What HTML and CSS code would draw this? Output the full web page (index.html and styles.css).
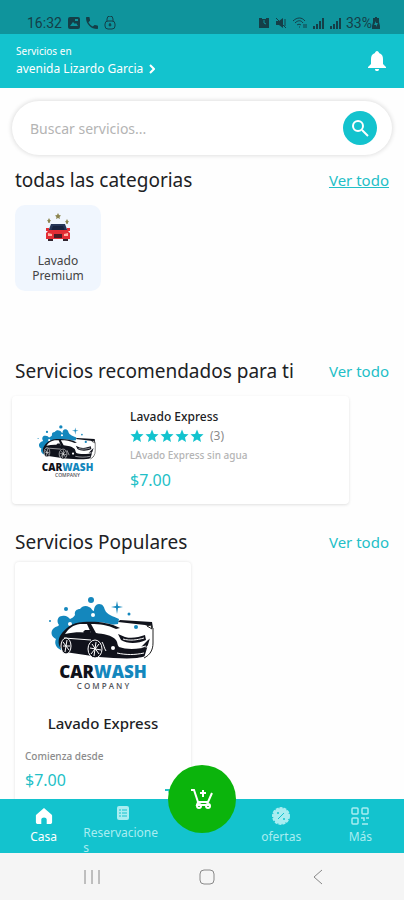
FILE: index.html
```html
<!DOCTYPE html>
<html lang="es">
<head>
    <meta charset="UTF-8">
    <meta name="viewport" content="width=device-width, initial-scale=1.0">
    <title>Car Wash</title>
    <link rel="stylesheet" href="styles.css">
</head>
<body>
    <!-- Shared drawings -->
    <svg class="defs" aria-hidden="true">
        <symbol id="star" viewBox="0 0 24 24">
            <path d="M12 1l3.2 7.4 8 .7-6.100 5.300 1.800 7.900L12 18.100l-6.900 4.200 1.800-7.900L.8 9.100l8-.7z"/>
        </symbol>
        <symbol id="carwash" viewBox="0 0 110 66">
            <!-- foam -->
            <g fill="#1487bd">
                <path d="M13 54C8 52 6 47 8 43c-5-2-6-8-2-11 2-2 4-1 5-3-3-4-1-9 3-9 4-1 6 1 8 3 2-1 4-2 5-4-1-4 2-6 5-6 2-3 6-4 9-2 3 1 3 4 5 4 0-4 2-7 5-7 4 0 5 3 6 6 2 5 8 6 14 9l-1 5-16 2-26 1-11 8z"/>
                <circle cx="43" cy="4" r="3"/>
                <circle cx="18" cy="13" r="2"/>
                <circle cx="2" cy="25" r="1"/>
                <circle cx="81" cy="18" r="1.500"/>
                <circle cx="88" cy="31" r="2"/>
                <path d="M69 5l1 5 5 1-5 1-1 6-1-6-5-1 5-1z"/>
            </g>
            <circle cx="45" cy="19" r="2" fill="#fff"/>
            <circle cx="22" cy="28" r="2" fill="#fff"/>
            <!-- body -->
            <path d="M14 40c4-7 10-12 18-13 14-2 30-1 40 5l24 4 8 6v12l-8 7H60l-16-2-31-8z" fill="#fff"/>
            <path d="M12 40c6-9 12-13 23-14 12-1 26 0 37 6l-4 1c-8-4-16-5-25-5l5 9c7 1 16 2 20 7 2 3 1 5 3 7 8 3 20 2 30 0l2 5c-3 4-8 5-14 6-11 1-24 0-38-1L17 56c-6-3-8-10-5-16z" fill="#10121b"/>
            <path d="M17 38c4-6 8-9 15-10h7l4 9c-9-1-17-1-26 1z" fill="#fff"/>
            <path d="M35 36l2-2h5l1 3-6 1z" fill="#10121b"/>
            <path d="M70 38l7 3c7 2 14 0 20-2l1 5c-8 4-19 4-25 0zM100 44l3-2v5l-6 5-4-1z" fill="#10121b"/>
            <path d="M72 24l32 2 1 6-8-3-27-3z" fill="#10121b"/>
            <path d="M99 30l4-1 1 4zM105 32v15c0 7-3 12-9 15" fill="#fff" stroke="#222" stroke-width="1"/>
            <path d="M16 42l27 2M73 50c8 2 17 2 25 0M69 57c9 2 18 2 27 0M75 43c7 2 14 1 21-1M54 46c2 3 2 6 4 9" fill="none" stroke="#fff" stroke-width="1"/>
            <ellipse cx="18" cy="50" rx="5" ry="8" fill="#10121b" stroke="#fff"/>
            <ellipse cx="47" cy="53" rx="7" ry="9" fill="#10121b" stroke="#fff"/>
            <path d="M48 46l-2 14M42 52l11 2M44 48l7 10M51 48l-8 10M19 44l-2 12M15 50h7M15 46l6 8" stroke="#fff" stroke-width="1"/>
            <circle cx="65" cy="52" r="2" fill="#fff"/>
        </symbol>
    </svg>

    <div class="app">
        <div class="status-bar">
            <div class="status-group">
                <span>16:32</span>
                <svg width="12" height="12" viewBox="0 0 12 12"><rect width="12" height="12" rx="2" fill="currentColor"/><path d="M2 9l3-4 2 2 1-1 2 3zM7 2h3v2H7z" fill="#0f949c"/></svg>
                <svg width="12" height="12" viewBox="3 3 18 18" fill="currentColor"><path d="M6.600 10.800c1.400 2.800 3.800 5.100 6.600 6.600l2.200-2.200c.3-.3.700-.4 1-.2 1.100.4 2.300.6 3.600.6.600 0 1 .4 1 1V20c0 .6-.4 1-1 1C10.600 21 3 13.400 3 4c0-.6.400-1 1-1h3.500c.6 0 1 .4 1 1 0 1.200.2 2.400.6 3.600.1.300 0 .7-.2 1z"/></svg>
                <svg width="12" height="14" viewBox="0 0 12 14" fill="none" stroke="currentColor"><rect x="1" y="5" width="10" height="8" rx="3"/><path d="M3 5V3a3 3 0 0 1 6 0v2M6 7v3"/><circle cx="6" cy="9" r="1"/></svg>
            </div>
            <div class="status-group status-right">
                <svg width="12" height="12" viewBox="0 0 12 12"><path d="M1 1h3v1h4V1h3v10H1z" fill="currentColor"/><path d="M6 3v3l2 1" stroke="#0f949c" fill="none"/></svg>
                <svg width="12" height="12" viewBox="0 0 12 12"><path d="M1 4h3l4-3v10L4 8H1z" fill="currentColor"/><path d="M1 1l10 10M10 2v7" stroke="currentColor"/></svg>
                <svg width="15" height="12" viewBox="0 0 15 12" fill="none" stroke="currentColor"><path d="M1 4c4-4 9-4 12 0M3 6c3-3 6-3 8 0M5 8c1-1 3-1 4 0M7 10h1M12 7v4M14 7v4"/></svg>
                <svg width="12" height="12" viewBox="0 0 12 12" stroke="currentColor" stroke-width="2"><path d="M2 12V9M5 12V7M8 12V4M11 12V1"/></svg>
                <svg width="12" height="12" viewBox="0 0 12 12" stroke="currentColor" stroke-width="2"><path d="M2 12V9M5 12V7M8 12V4M11 12V1"/></svg>
                <span class="battery">33%<svg width="8" height="12" viewBox="0 0 8 12"><path d="M3 0h2v1h2v4l1 4v3H0V9l1-4V1h2z" fill="currentColor"/><path d="M4 4L2 8h2v2l2-4H4z" fill="#0f949c"/></svg></span>
            </div>
        </div>

        <header class="header">
            <div>
                <div class="header-label">Servicios en</div>
                <a class="address" href="#">avenida Lizardo Garcia
                    <svg width="6" height="10" viewBox="0 0 6 10" fill="none" stroke="currentColor" stroke-width="2"><path d="M1 1l4 4-4 4"/></svg>
                </a>
            </div>
            <button class="bell" aria-label="Notificaciones">
                <svg width="18" height="20" viewBox="0 0 18 20" fill="currentColor"><path d="M9 0c1 0 2 1 2 2 3 1 4 3 4 6v5l3 3v1H0v-1l3-3V8c0-3 1-5 4-6 0-1 1-2 2-2zM7 18h4c0 3-4 3-4 0z"/></svg>
            </button>
        </header>

        <main class="content">
            <form class="search" onsubmit="return false">
                <input type="text" placeholder="Buscar servicios..." aria-label="Buscar servicios">
                <button class="search-btn" aria-label="Buscar">
                    <svg width="18" height="18" viewBox="0 0 18 18" fill="none" stroke="currentColor" stroke-width="2"><circle cx="7" cy="7" r="5"/><path d="M11 11l6 6"/></svg>
                </button>
            </form>

            <section class="categories">
                <div class="section-head">
                    <h2>todas las categorias</h2>
                    <a href="#" class="underlined">Ver todo</a>
                </div>
                <a class="category" href="#">
                    <svg width="26" height="30" viewBox="0 0 26 30">
                        <path d="M13 0l1 2 2 .5-1.500 1.500.5 2-2-1-2 1 .5-2L10 2.500l2-.5zM4 5l1 2 1 .5-1 1V10L4 9.500 3 10V8.500L2 7.500 3 7zM22 6l1 2 1 .5-1 1V11l-1-.5-1 .5V9.500l-1-1 1-.5z" fill="#8b8550"/>
                        <path d="M6 11h14l3 8H3z" fill="#263657"/>
                        <path d="M8 13h10l2 5H6z" fill="#17233f"/>
                        <path d="M4 17h18l3 3v6H1v-6zM1 15h3v3H1zM22 15h3v3h-3z" fill="#e32d35"/>
                        <path d="M3 26h5v2H3zM18 26h5v2h-5z" fill="#30252f"/>
                        <rect x="9" y="21" width="8" height="4" fill="#4a1c27"/>
                        <path d="M3 20l4 1v2H3zM23 20l-4 1v2h4z" fill="#ffb3a5"/>
                    </svg>
                    <span>Lavado Premium</span>
                </a>
            </section>

            <section class="recommended">
                <div class="section-head">
                    <h2>Servicios recomendados para ti</h2>
                    <a href="#">Ver todo</a>
                </div>
                <article class="service-row">
                    <div class="logo logo-small">
                        <svg><use href="#carwash"/></svg>
                        <div class="logo-name">CAR<span>WASH</span></div>
                        <div class="logo-sub">COMPANY</div>
                    </div>
                    <div class="service-info">
                        <h3>Lavado Express</h3>
                        <div class="rating">
                            <svg><use href="#star"/></svg>
                            <svg><use href="#star"/></svg>
                            <svg><use href="#star"/></svg>
                            <svg><use href="#star"/></svg>
                            <svg><use href="#star"/></svg>
                            <span>(3)</span>
                        </div>
                        <p class="description">LAvado Express sin agua</p>
                        <div class="price">$7.00</div>
                    </div>
                </article>
            </section>

            <section class="popular">
                <div class="section-head">
                    <h2>Servicios Populares</h2>
                    <a href="#">Ver todo</a>
                </div>
                <article class="service-card">
                    <div class="logo logo-large">
                        <svg><use href="#carwash"/></svg>
                        <div class="logo-name">CAR<span>WASH</span></div>
                        <div class="logo-sub">C O M P A N Y</div>
                    </div>
                    <h3>Lavado Express</h3>
                    <p class="from">Comienza desde</p>
                    <div class="card-foot">
                        <div class="price">$7.00</div>
                        <button class="add" aria-label="Agregar">
                            <svg width="18" height="18" viewBox="0 0 18 18" fill="none" stroke="currentColor" stroke-width="2"><path d="M0 1h4l3 11h9l2-8H5"/></svg>
                        </button>
                    </div>
                </article>
            </section>
        </main>

        <nav class="tabs">
            <a class="tab active" href="#">
                <svg width="20" height="20" viewBox="0 0 20 20" fill="currentColor"><path d="M10 1l8 7c1 1 1 1 1 2v7c0 1-1 2-2 2h-4v-5c0-3-6-3-6 0v5H3c-1 0-2-1-2-2v-7c0-1 0-1 1-2z"/></svg>
                <span>Casa</span>
            </a>
            <a class="tab bookings" href="#">
                <svg width="12" height="14" viewBox="0 0 12 14"><rect width="12" height="14" rx="2" fill="currentColor"/><path d="M2 4h2M5 4h5M2 7h2M5 7h5M2 10h2M5 10h5" stroke="#13c3ce"/></svg>
                <span>Reservaciones</span>
            </a>
            <button class="cart" aria-label="Carrito">
                <svg width="22" height="20" viewBox="0 0 22 20" fill="none" stroke="currentColor" stroke-width="2"><path d="M0 1h3l4 12h10l4-9M12 1v7M9 4h6M7 13l-1 3h12"/><circle cx="8" cy="17" r="2"/><circle cx="17" cy="17" r="2"/></svg>
            </button>
            <a class="tab" href="#">
                <svg width="18" height="18" viewBox="0 0 18 18"><circle cx="9" cy="9" r="8" fill="currentColor" stroke="currentColor" stroke-width="2" stroke-dasharray="3 1"/><path d="M6 12l6-6" stroke="#13c3ce" stroke-width="1"/><circle cx="6" cy="6" r="1" fill="#13c3ce"/><circle cx="12" cy="12" r="1" fill="#13c3ce"/></svg>
                <span>ofertas</span>
            </a>
            <a class="tab" href="#">
                <svg width="18" height="18" viewBox="0 0 18 18" fill="none" stroke="currentColor" stroke-width="1.500"><rect x="1" y="1" width="6" height="6" rx="1"/><rect x="11" y="1" width="6" height="6" rx="1"/><rect x="1" y="11" width="6" height="6" rx="1"/><path d="M10 11h3v3M15 11h3M11 17h6"/></svg>
                <span>Más</span>
            </a>
        </nav>

        <div class="system-bar">
            <button aria-label="Recientes"><svg width="16" height="16" viewBox="0 0 16 16" stroke="currentColor" stroke-width="1"><path d="M1 1v14M8 1v14M15 1v14"/></svg></button>
            <button aria-label="Inicio"><svg width="16" height="16" viewBox="0 0 16 16" fill="none" stroke="currentColor" stroke-width="1"><rect x="1" y="1" width="14" height="14" rx="4"/></svg></button>
            <button aria-label="Atrás"><svg width="10" height="16" viewBox="0 0 10 16" fill="none" stroke="currentColor" stroke-width="1"><path d="M9 1L1 8l8 7"/></svg></button>
        </div>
    </div>
</body>
</html>
```
FILE: styles.css
```css
* {
    box-sizing: border-box;
}
body {
    margin: 0;
    font-family: "Noto Sans", sans-serif;
    background: #fefefe;
    color: #202124;
}
h2, h3, p {
    margin: 0;
    font-weight: 500;
}
a {
    color: inherit;
    text-decoration: none;
}
button {
    border: 0;
    padding: 0;
    background: none;
    color: inherit;
    font: inherit;
}
svg {
    display: block;
    flex-shrink: 0;
}
.defs {
    position: absolute;
    width: 0;
    height: 0;
}
.app {
    display: flex;
    flex-direction: column;
    height: 100vh;
}

/* Top bars */
.status-bar {
    display: flex;
    justify-content: space-between;
    align-items: flex-end;
    height: 34px;
    padding: 0 24px 2px 27px;
    background: #0f949c;
    color: #143f48;
    font-family: Roboto, sans-serif;
    font-size: 14px;
    line-height: 18px;
}
.status-group {
    display: flex;
    align-items: center;
    gap: 6px;
}
.status-right {
    gap: 5px;
}
.battery {
    display: flex;
    align-items: center;
}
.header {
    display: flex;
    justify-content: space-between;
    align-items: center;
    height: 54px;
    padding: 0 18px 0 16px;
    background: #13c3ce;
    color: #fff;
}
.header-label {
    font-size: 10px;
    line-height: 16px;
}
.address {
    display: flex;
    align-items: center;
    gap: 6px;
    font-size: 12px;
    line-height: 20px;
}

/* Content */
.content {
    flex: 1;
    min-height: 0;
    overflow: hidden;
    padding: 13px 12px 0;
}
.search {
    display: flex;
    align-items: center;
    height: 54px;
    padding: 0 15px 0 18px;
    border-radius: 27px;
    background: #fff;
    box-shadow: 0 0 4px 1px rgba(0,0,0,0.12);
}
.search input {
    flex: 1;
    min-width: 0;
    border: 0;
    padding: 0;
    outline: none;
    background: none;
    font: inherit;
    font-size: 14px;
}
.search input::placeholder {
    color: #b4b4b4;
}
.search-btn {
    display: flex;
    align-items: center;
    justify-content: center;
    width: 34px;
    height: 34px;
    border-radius: 50%;
    background: #13c3ce;
    color: #fff;
}
.section-head {
    display: flex;
    justify-content: space-between;
    align-items: center;
    padding: 0 3px;
    line-height: 26px;
}
.section-head h2 {
    font-size: 19px;
    font-weight: 400;
}
.section-head a {
    color: #23bfc7;
    font-size: 15px;
}
.section-head .underlined {
    text-decoration: underline;
}
.categories {
    padding-top: 12px;
    min-height: 203px;
}
.category {
    display: flex;
    flex-direction: column;
    align-items: center;
    gap: 10px;
    width: 86px;
    height: 86px;
    margin: 12px 3px 0;
    padding: 8px 12px 0;
    border-radius: 10px;
    background: #f0f6fe;
    color: #444;
    font-size: 12px;
    line-height: 15px;
    text-align: center;
}
.service-row {
    display: flex;
    width: 337px;
    height: 108px;
    margin-top: 12px;
    padding: 12px 25px;
    gap: 32px;
    border-radius: 4px;
    background: #fff;
    box-shadow: 0 1px 3px rgba(0,0,0,0.12);
}

/* Logo */
.logo {
    color: #10121b;
    font-family: "Open Sans", sans-serif;
    font-weight: 800;
    text-align: center;
}
.logo-name span {
    color: #1487bd;
}
.logo-sub {
    color: #55565c;
    font-weight: 600;
}
.logo-small {
    width: 61px;
    margin-top: 16px;
}
.logo-small svg {
    width: 61px;
    height: 38px;
}
.logo-small .logo-name {
    font-size: 10px;
    line-height: 11px;
}
.logo-small .logo-sub {
    font-size: 5px;
    line-height: 5px;
}
.logo-large {
    width: 110px;
    margin: 0 auto;
}
.logo-large svg {
    width: 110px;
    height: 66px;
}
.logo-large .logo-name {
    font-size: 17px;
    line-height: 20px;
}
.logo-large .logo-sub {
    font-size: 8px;
    line-height: 8px;
}

.service-info h3 {
    font-size: 12px;
    line-height: 18px;
}
.rating {
    display: flex;
    align-items: center;
    gap: 1px;
    color: #8b8b8b;
    font-size: 12px;
    line-height: 20px;
}
.rating svg {
    width: 14px;
    height: 14px;
    fill: #13c3ce;
}
.rating span {
    padding-left: 5px;
}
.description {
    color: #b4b4b4;
    font-size: 10px;
    line-height: 18px;
}
.price {
    color: #23bfc7;
    font-size: 16px;
    line-height: 24px;
}
.service-info .price {
    margin-top: 4px;
}
.popular {
    padding-top: 25px;
}
.service-card {
    width: 176px;
    margin: 7px 3px 0;
    padding: 34px 10px 12px;
    border-radius: 4px;
    background: #fff;
    box-shadow: 0 0 3px rgba(0,0,0,0.12);
}
.service-card h3 {
    margin-top: 22px;
    font-size: 15px;
    line-height: 22px;
    text-align: center;
}
.from {
    margin-top: 14px;
    color: #8b8b8b;
    font-size: 10px;
    line-height: 16px;
}
.card-foot {
    display: flex;
    justify-content: space-between;
    margin-top: 4px;
}
.add {
    align-self: flex-end;
    margin-bottom: -15px;
    margin-right: -2px;
    color: #23bfc7;
}

/* Bottom navigation */
.tabs {
    display: grid;
    grid-template-columns: repeat(5, 1fr);
    flex-shrink: 0;
    justify-items: center;
    height: 54px;
    padding: 0 4px;
    background: #13c3ce;
    color: #a9edf1;
    font-size: 12px;
    line-height: 16px;
}
.tab {
    display: flex;
    flex-direction: column;
    align-items: center;
    width: 100%;
    height: 54px;
    padding-top: 8px;
    gap: 4px;
    overflow: hidden;
}
.tab svg {
    height: 18px;
}
.tab.active {
    color: #fff;
}
.tab.bookings {
    padding-top: 7px;
    gap: 5px;
}
.tab.bookings svg {
    height: 14px;
}
.tab.bookings span {
    width: 100%;
    line-height: 15px;
    overflow-wrap: anywhere;
}
.cart {
    position: relative;
    top: -34px;
    display: flex;
    align-items: center;
    justify-content: center;
    width: 68px;
    height: 68px;
    border-radius: 50%;
    background: #0bb40c;
    color: #fff;
}
.system-bar {
    display: flex;
    justify-content: space-between;
    align-items: center;
    flex-shrink: 0;
    height: 47px;
    padding: 0 81px 0 84px;
    background: #f5f5f5;
    color: #888;
}
```
